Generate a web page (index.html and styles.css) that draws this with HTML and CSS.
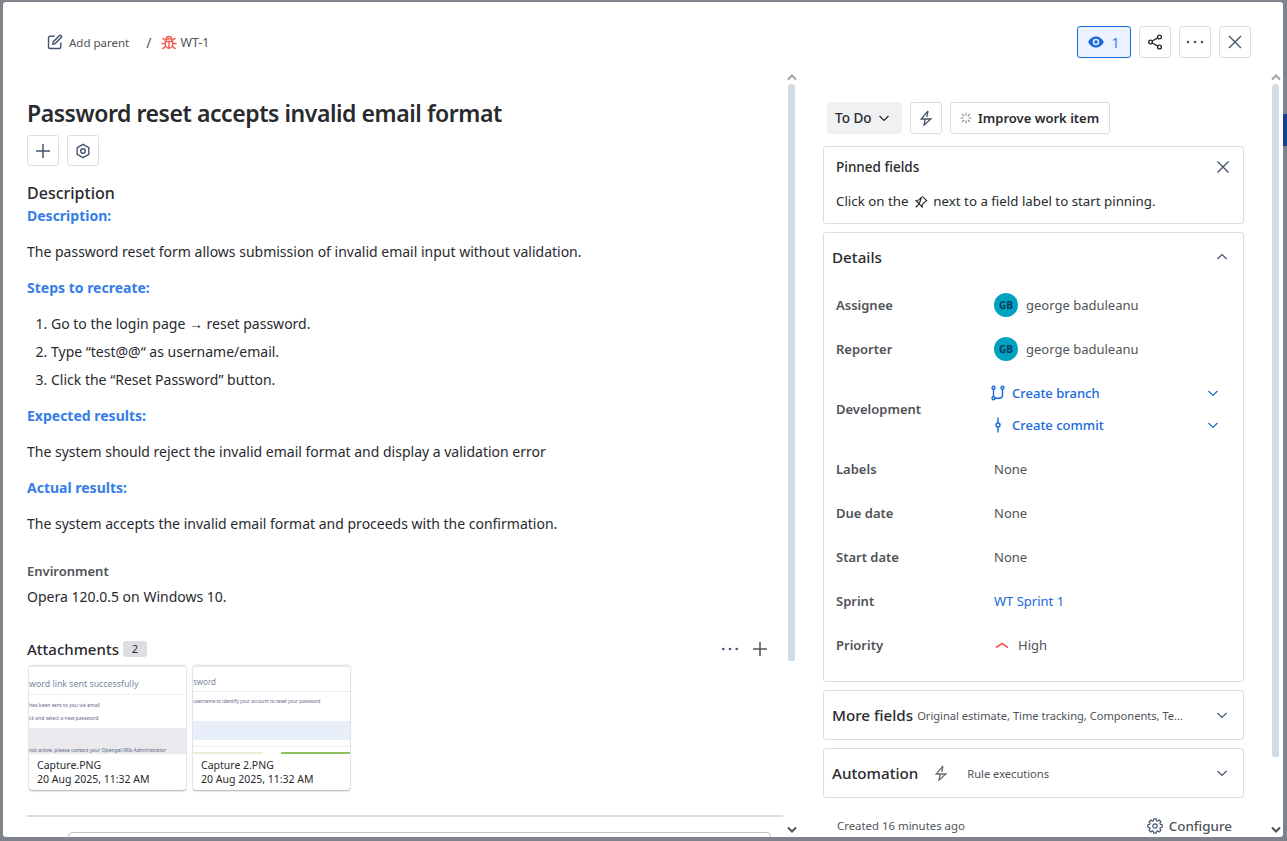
FILE: index.html
```html
<!DOCTYPE html>
<html lang="en">
<head>
<meta charset="utf-8">
<title>WT-1</title>
<link rel="stylesheet" href="styles.css">
</head>
<body>
<div class="backdrop"></div>
<div class="modal">
  <header class="topbar">
    <div class="crumbs">
      <svg class="ico16" viewBox="0 0 16 16" fill="none" stroke="#44546f" stroke-width="1.4"><path d="M7.5 2.2H3a1.5 1.5 0 0 0-1.500 1.500V13A1.500 1.500 0 0 0 3 14.500h9.300a1.500 1.500 0 0 0 1.500-1.500V8.500"/><path d="M5.800 10.300l.5-2.600 6-6a1.300 1.300 0 0 1 1.900 1.900l-6 6z"/></svg>
      <span class="crumb-text">Add parent</span>
      <span class="slash">/</span>
      <svg class="ico16" viewBox="0 0 16 16" fill="none" stroke="#f15b50" stroke-width="1.400"><ellipse cx="8" cy="9.500" rx="3.800" ry="4.800"/><path d="M5 5.500a3 3 0 0 1 6 0M4.200 7.500h7.600M8 7.500V14M4.200 9.500H.5M15.500 9.500h-3.700M1.500 4l3 2.400M14.500 4l-3 2.400M1.500 15l3-2.600M14.500 15l-3-2.600"/></svg>
      <span class="crumb-text wt">WT-1</span>
    </div>
    <div class="actions">
      <button class="btn watch"><svg class="ico16" viewBox="0 0 16 16" fill="#1868db"><path fill-rule="evenodd" d="M8 2.500c3.600 0 6.500 2.700 7.800 5.500-1.300 2.800-4.200 5.500-7.800 5.500S1.500 10.800.2 8C1.500 5.200 4.400 2.500 8 2.500zm0 2.200a3.300 3.300 0 1 0 0 6.600 3.300 3.300 0 0 0 0-6.600zm0 1.500a1.800 1.800 0 1 1 0 3.600 1.800 1.800 0 0 1 0-3.600z"/></svg><span>1</span></button>
      <button class="btn square"><svg class="ico16" viewBox="0 0 16 16" fill="none" stroke="#292a2e" stroke-width="1.400"><circle cx="3.500" cy="8" r="1.900"/><circle cx="12.500" cy="3" r="1.900"/><circle cx="12.500" cy="13" r="1.900"/><path d="M5.200 7l5.600-3.100M5.200 9l5.600 3.100"/></svg></button>
      <button class="btn square"><svg class="ico16" viewBox="0 0 16 16" fill="#44546f"><circle cx="1" cy="8" r="1.300"/><circle cx="8" cy="8" r="1.300"/><circle cx="15" cy="8" r="1.300"/></svg></button>
      <button class="btn square"><svg class="ico16" viewBox="0 0 16 16" fill="none" stroke="#44546f" stroke-width="1.400"><path d="M2 2l12 12M14 2L2 14"/></svg></button>
    </div>
  </header>

  <div class="columns">
    <main class="left">
      <div class="left-scroll">
        <h1 class="title">Password reset accepts invalid email format</h1>
        <div class="title-tools">
          <button class="btn square tool"><svg class="ico16" viewBox="0 0 16 16" fill="none" stroke="#44546f" stroke-width="1.500"><path d="M8 1v14M1 8h14"/></svg></button>
          <button class="btn square tool"><svg class="ico16" viewBox="0 0 16 16" fill="none" stroke="#44546f" stroke-width="1.400"><path d="M8 1.300l5.800 3.350v6.700L8 14.700l-5.800-3.350v-6.700z"/><circle cx="8" cy="8" r="2.300"/></svg></button>
        </div>
        <h2 class="section-head">Description</h2>
        <div class="desc">
          <p class="blue">Description:</p>
          <p>The password reset form allows submission of invalid email input without validation.</p>
          <p class="blue">Steps to recreate:</p>
          <ol>
            <li>Go to the login page → reset password.</li>
            <li>Type “test@@“ as username/email.</li>
            <li>Click the “Reset Password” button.</li>
          </ol>
          <p class="blue">Expected results:</p>
          <p>The system should reject the invalid email format and display a validation error</p>
          <p class="blue">Actual results:</p>
          <p>The system accepts the invalid email format and proceeds with the confirmation.</p>
        </div>
        <h3 class="env-head">Environment</h3>
        <p class="env">Opera 120.0.5 on Windows 10.</p>
        <div class="attach-head">
          <span class="attach-title">Attachments</span>
          <span class="count">2</span>
          <span class="attach-tools">
            <svg class="ico16" viewBox="0 0 16 16" fill="#44546f"><circle cx="1.300" cy="8" r="1.300"/><circle cx="8" cy="8" r="1.300"/><circle cx="14.700" cy="8" r="1.300"/></svg>
            <svg class="ico16" viewBox="0 0 16 16" fill="none" stroke="#505258" stroke-width="1.500"><path d="M1 8h14M8 1v14"/></svg>
          </span>
        </div>
        <div class="cards">
          <article class="card">
            <div class="thumb">
              <div class="t1-head">word link sent successfully</div>
              <div class="tiny t1-a">has been sent to you via email</div>
              <div class="tiny t1-b">ck and select a new password</div>
              <div class="t1-grey"><span class="tiny">not active, please contact your Opengel-IRIs Administrator</span></div>
            </div>
            <div class="card-meta"><div>Capture.PNG</div><div>20 Aug 2025, 11:32 AM</div></div>
          </article>
          <article class="card">
            <div class="thumb">
              <div class="t2-head">sword</div>
              <div class="tiny t2-a">username to identify your account to reset your password</div>
              <div class="t2-blue"></div>
              <div class="t2-line"></div>
              <div class="t2-green"><span class="g1"></span><span class="g2"></span></div>
            </div>
            <div class="card-meta"><div>Capture 2.PNG</div><div>20 Aug 2025, 11:32 AM</div></div>
          </article>
        </div>
        <hr class="rule">
        <div class="comment-box"></div>
      </div>
      <div class="scrollbar main-bar">
        <svg class="arrow up" viewBox="0 0 10 8"><path d="M1 6.500L5 2.500l4 4" fill="none" stroke="#a3a3a3" stroke-width="2"/></svg>
        <div class="track"><div class="thumbbar"></div></div>
        <svg class="arrow" viewBox="0 0 10 8"><path d="M1 1.500l4 4 4-4" fill="none" stroke="#505050" stroke-width="2"/></svg>
      </div>
    </main>

    <aside class="right">
      <div class="right-scroll">
        <div class="status-row">
          <button class="status">To Do <svg class="ico12" viewBox="0 0 12 12" fill="none" stroke="#292a2e" stroke-width="1.200"><path d="M1.500 4L6 8.500 10.500 4"/></svg></button>
          <button class="btn square bolt"><svg class="ico16" viewBox="0 0 16 16" fill="none" stroke="#44546f" stroke-width="1.300"><path d="M10 .8L3.200 9h9.600L6 15.200l1.300-6.200M10 .8L8.700 7"/></svg></button>
          <button class="btn improve"><svg class="ico12" viewBox="0 0 12 12" fill="none" stroke="#8c8f97" stroke-width="1.100"><path d="M6 .5v3M6 8.500v3M.5 6h3M8.500 6h3M2 2l2.200 2.200M7.800 7.800L10 10M10 2L7.800 4.200M4.200 7.800L2 10"/></svg>Improve work item</button>
        </div>
        <section class="panel pinned">
          <div class="pinned-top">
            <span class="pinned-title">Pinned fields</span>
            <svg class="ico16 pinned-x" viewBox="0 0 16 16" fill="none" stroke="#44546f" stroke-width="1.400"><path d="M2.500 2.500l11 11M13.500 2.500l-11 11"/></svg>
          </div>
          <p class="pinned-text">Click on the <svg class="ico14" viewBox="0 0 16 16" fill="none" stroke="#292a2e" stroke-width="1.300"><path d="M9.500 1.500l5 5-1.500.8-3.300 3.300-.5 3L6 10 2 14M6 10L2.400 6.300l3-.5 3.300-3.300z"/></svg> next to a field label to start pinning.</p>
        </section>
        <section class="panel details">
          <div class="panel-head">
            <span class="panel-title">Details</span>
            <svg class="ico12 chev" viewBox="0 0 12 12" fill="none" stroke="#44546f" stroke-width="1.200"><path d="M1.500 8L6 3.500 10.500 8"/></svg>
          </div>
          <dl class="fields">
            <dt>Assignee</dt>
            <dd><span class="avatar">GB</span>george baduleanu</dd>
            <dt>Reporter</dt>
            <dd><span class="avatar">GB</span>george baduleanu</dd>
            <dt>Development</dt>
            <dd class="dev">
              <span class="dev-row"><svg class="ico16" viewBox="0 0 16 16" fill="none" stroke="#1868db" stroke-width="1.400"><circle cx="3.500" cy="2.800" r="1.500"/><circle cx="12.500" cy="2.800" r="1.500"/><circle cx="3.500" cy="13.200" r="1.500"/><path d="M3.500 4.300v7.400M12.500 4.300V10a3.200 3.200 0 0 1-3.200 3.200H5"/></svg><a>Create branch</a><svg class="ico12 dev-chev" viewBox="0 0 12 12" fill="none" stroke="#1868db" stroke-width="1.200"><path d="M1.500 4L6 8.500 10.500 4"/></svg></span>
              <span class="dev-row"><svg class="ico16" viewBox="0 0 16 16" fill="none" stroke="#1868db" stroke-width="1.400"><circle cx="8" cy="8" r="2"/><path d="M8 .5V6M8 10v5.500"/></svg><a>Create commit</a><svg class="ico12 dev-chev" viewBox="0 0 12 12" fill="none" stroke="#1868db" stroke-width="1.200"><path d="M1.500 4L6 8.500 10.500 4"/></svg></span>
            </dd>
            <dt>Labels</dt>
            <dd class="none">None</dd>
            <dt>Due date</dt>
            <dd class="none">None</dd>
            <dt>Start date</dt>
            <dd class="none">None</dd>
            <dt>Sprint</dt>
            <dd><a>WT Sprint 1</a></dd>
            <dt>Priority</dt>
            <dd><svg class="ico16 prio" viewBox="0 0 16 16" fill="none" stroke="#f15b50" stroke-width="1.600"><path d="M2 10.500l6-4 6 4"/></svg>High</dd>
          </dl>
        </section>
        <section class="panel collapsed">
          <span class="panel-title">More fields</span>
          <span class="hint more-hint">Original estimate, Time tracking, Components, Te...</span>
          <svg class="ico12 chev" viewBox="0 0 12 12" fill="none" stroke="#44546f" stroke-width="1.200"><path d="M1.500 4L6 8.500 10.500 4"/></svg>
        </section>
        <section class="panel collapsed">
          <span class="panel-title">Automation</span>
          <svg class="ico16 auto-bolt" viewBox="0 0 16 16" fill="none" stroke="#6b6e76" stroke-width="1.300"><path d="M10 .8L3.200 9h9.600L6 15.200l1.300-6.200M10 .8L8.700 7"/></svg>
          <span class="hint">Rule executions</span>
          <svg class="ico12 chev" viewBox="0 0 12 12" fill="none" stroke="#44546f" stroke-width="1.200"><path d="M1.500 4L6 8.500 10.500 4"/></svg>
        </section>
        <footer class="foot">
          <span class="created">Created 16 minutes ago</span>
          <span class="configure"><svg class="ico16" viewBox="0 0 16 16" fill="none" stroke="#44546f" stroke-width="1.200" stroke-linejoin="round"><circle cx="8" cy="8" r="2.200"/><path d="M6.390 2.740L6.730.81h2.540l.34 1.930.97.400 1.610-1.120 1.790 1.790-1.120 1.610.40.970 1.930.34v2.540l-1.930.34-.40.970 1.120 1.610-1.790 1.790-1.610-1.120-.97.40-.34 1.930H6.730l-.34-1.930-.97-.40-1.610 1.120-1.790-1.790 1.120-1.610-.40-.97-1.930-.34V6.730l1.930-.34.40-.97-1.120-1.610 1.790-1.790 1.610 1.120z"/></svg>Configure</span>
        </footer>
      </div>
      <div class="scrollbar side-bar">
        <svg class="arrow up" viewBox="0 0 10 8"><path d="M1 6.500L5 2.500l4 4" fill="none" stroke="#a3a3a3" stroke-width="2"/></svg>
        <div class="track"><div class="thumbbar"></div></div>
        <svg class="arrow" viewBox="0 0 10 8"><path d="M1 1.500l4 4 4-4" fill="none" stroke="#505050" stroke-width="2"/></svg>
      </div>
    </aside>
  </div>
</div>
</body>
</html>
```
FILE: styles.css
```css
* { box-sizing: border-box; }
html, body { margin: 0; height: 100%; overflow: hidden; }
body { font-family: "Noto Sans", "Liberation Sans", sans-serif; font-size: 14px; color: #292a2e; background: #7f848c; }
.backdrop { position: fixed; right: 0; top: 114px; width: 4px; height: 32px; background: #13408c; }
.modal { position: absolute; left: 3px; top: 2px; width: 1280px; height: 835px; background: #fff; border-radius: 3px; overflow: hidden; display: flex; flex-direction: column; }
svg { display: block; flex: none; }
.ico16 { width: 16px; height: 16px; }
.ico14 { width: 14px; height: 14px; display: inline-block; vertical-align: -3px; margin: 0 2px; }
.ico12 { width: 12px; height: 12px; }

.topbar { height: 68px; flex: none; display: flex; align-items: flex-start; justify-content: space-between; padding: 24px 32px 0 44px; }
.crumbs { display: flex; align-items: center; height: 32px; color: #505258; font-size: 11.500px; }
.crumbs .crumb-text { margin-left: 6px; }
.crumbs .wt { margin-left: 4px; font-size: 12.300px; }
.slash { margin: 0 9px 0 17px; font-size: 14px; }
.actions { display: flex; gap: 8px; }
.btn { height: 32px; background: #fff; border: 1px solid #dcdde0; border-radius: 3px; padding: 0; display: flex; align-items: center; justify-content: center; font: inherit; color: #292a2e; }
.square { width: 32px; }
.watch { width: 54px; gap: 7px; background: #e9f2fe; border-color: #1868db; color: #357de8; }

.columns { flex: 1; min-height: 0; display: flex; }
.left { width: 794px; display: flex; flex: none; }
.left-scroll { flex: 1; padding: 29px 0 0 24px; overflow: hidden; min-width: 0; }
.title { margin: 0; font-size: 23px; line-height: 28px; font-weight: 600; letter-spacing: -.44px; }
.title-tools { display: flex; gap: 8px; margin-top: 8px; }
.tool { width: 32px; height: 31px; }
.section-head { margin: 16px 0 0; font-size: 16px; line-height: 22px; font-weight: 500; }
.desc p { margin: 0 0 16px; line-height: 20px; }
.desc .blue { color: #357de8; font-weight: 700; }
.desc { margin-top: 2px; }
.desc ol { margin: 0 0 16px; padding-left: 24px; }
.desc li { line-height: 20px; margin-bottom: 8px; }
.desc li:last-child { margin-bottom: 0; }
.env-head { margin: 28px 0 0; font-size: 13px; line-height: 18px; font-weight: 600; color: #505258; }
.env { margin: 7px 0 0; line-height: 20px; }
.attach-head { display: flex; align-items: center; margin-top: 31px; height: 22px; padding-right: 15px; }
.attach-title { font-size: 15px; font-weight: 500; }
.count { margin-left: 4px; width: 24px; height: 16px; background: #dddee1; border-radius: 3px; font-size: 11px; line-height: 16px; text-align: center; }
.attach-tools { margin-left: auto; display: flex; gap: 14px; }
.cards { display: flex; gap: 7px; margin-top: 5px; padding-left: 2px; }
.card { width: 157px; height: 125px; border-radius: 3px; background: #fff; box-shadow: 0 1px 2px rgba(9,30,66,.35), 0 0 1px rgba(9,30,66,.25); overflow: hidden; display: flex; flex-direction: column; }
.thumb { height: 89px; flex: none; border-top: 2px solid #e8e8ec; overflow: hidden; position: relative; white-space: nowrap; }
.card-meta { padding: 4px 8px 0 8px; font-size: 10.500px; line-height: 14px; color: #292a2e; }
.tiny { font-size: 5px; line-height: 7px; color: #5c6a86; display: block; }
.t1-head { font-size: 8.800px; line-height: 16px; margin-top: 9px; color: #7b88a3; border-bottom: 1px solid #eee; height: 19px; }
.t1-a { margin-top: 7px; }
.t1-b { margin-top: 6px; }
.t1-grey { margin-top: 6px; height: 26px; background: #e9e9ee; padding-top: 19px; }
.t2-head { font-size: 8px; line-height: 12px; margin-top: 9px; height: 16px; color: #7b88a3; border-bottom: 1px solid #eee; }
.t2-a { margin-top: 6px; font-size: 4.700px; }
.t2-blue { height: 19px; margin-top: 16px; background: #e8effa; }
.t2-line { height: 1px; margin-top: 6px; background: #eee; }
.t2-green { position: absolute; left: 0; right: 0; bottom: 0; height: 2px; display: flex; justify-content: space-between; }
.g1 { width: 70px; background: #e3f0d4; }
.g2 { width: 69px; background: #8fbf60; }
.rule { border: 0; height: 2px; background: #dcdcdc; margin: 25px 0 0 0; }
.comment-box { height: 40px; margin: 15px 12px 0 41px; border: 1px solid #bfc1c4; border-radius: 4px; }

.scrollbar { width: 11px; flex: none; display: flex; flex-direction: column; align-items: center; margin-left: 3px; }
.arrow { width: 10px; height: 8px; }
.arrow.up { margin-bottom: 3px; }
.track { flex: 1; width: 7px; }
.thumbbar { background: #cfdbe5; border-radius: 4px 4px 2px 2px; width: 100%; }
.main-bar .thumbbar { height: 577px; }
.main-bar { margin-top: 3px; padding-bottom: 3px; }
.side-bar { margin-top: 3px; padding-bottom: 3px; margin-left: 26px; }
.side-bar .thumbbar { height: 673px; }

.right { flex: 1; display: flex; min-width: 0; padding-left: 26px; }
.right-scroll { width: 421px; flex: none; padding-top: 32px; }
.status-row { display: flex; gap: 8px; padding-left: 4px; }
.status { width: 75px; height: 32px; border: 0; background: #f0f1f2; border-radius: 3px; font: inherit; font-size: 13.500px; font-weight: 500; color: #292a2e; display: flex; align-items: center; justify-content: flex-start; padding-left: 8px; gap: 6px; }
.improve { width: 160px; gap: 6px; font-size: 13px; font-weight: 600; justify-content: flex-start; padding-left: 9px; }
.panel { border: 1px solid #dcdde0; border-radius: 3px; margin-top: 8px; }
.pinned { margin-top: 12px; height: 78px; padding: 0 12px; }
.pinned-top { display: flex; justify-content: space-between; align-items: center; height: 40px; }
.pinned-title { font-size: 13.500px; font-weight: 500; }
.pinned-x { margin-right: 0; }
.pinned-text { margin: 5px 0 0; font-size: 13.300px; line-height: 18px; }
.details { height: 450px; margin-top: 8px; padding: 0 8px; }
.panel-head { display: flex; align-items: center; justify-content: space-between; height: 48px; padding-right: 7px; }
.panel-title { font-size: 15.200px; font-weight: 500; }
.fields { margin: 0; display: grid; grid-template-columns: 158px 1fr; grid-auto-rows: minmax(44px, auto); padding: 2px 4px 0; }
.fields dt { display: flex; align-items: center; color: #505258; font-weight: 600; font-size: 13px; }
.fields dd { margin: 0; display: flex; align-items: center; color: #505258; font-size: 13px; }
.fields a, .dev-row { color: #1868db; }
.fields .dev { height: 76px; flex-direction: column; align-items: stretch; justify-content: center; margin-left: -4px; }
.dev-row { display: flex; align-items: center; height: 32px; gap: 6px; font-weight: 500; padding-right: 12px; }
.dev-chev { margin-left: auto; }
.avatar { width: 24px; height: 24px; border-radius: 50%; background: #00a2c2; color: #0b3a5e; font-size: 10px; font-weight: 700; display: flex; align-items: center; justify-content: center; margin-right: 8px; }
.fields .none { color: #505258; }
.prio { margin-right: 8px; }
.collapsed { height: 50px; display: flex; align-items: center; padding: 0 15px 0 8px; }
.collapsed .chev { margin-left: auto; }
.hint { font-size: 11.100px; color: #505258; }
.more-hint { margin-left: 4px; }
.auto-bolt { margin: 0 18px 0 15px; }
.foot { display: flex; justify-content: space-between; align-items: center; padding: 19px 12px 0 14px; }
.created { font-size: 11.400px; color: #505258; margin-top: -2px; }
.configure { display: flex; align-items: center; gap: 6px; font-size: 13.400px; font-weight: 500; color: #505258; }
```
